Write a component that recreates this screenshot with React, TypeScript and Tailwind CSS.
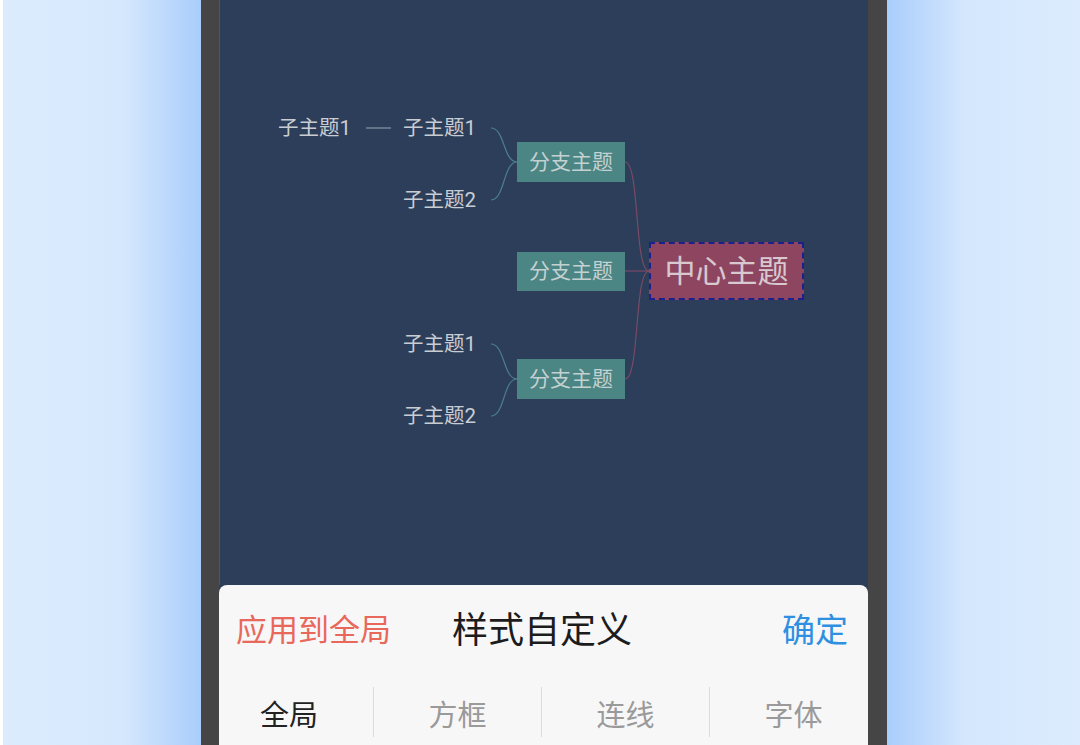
import React from 'react';

const font = { fontFamily: 'Roboto, "Noto Sans CJK SC", sans-serif' };

// Sub topic label, positioned by its vertical centre
function SubTopic({ label, left, cy }: { label: string; left: number; cy: number }) {
  return (
    <div
      className="absolute -translate-y-1/2 text-[20.5px] leading-none text-[#c9cdd3] whitespace-nowrap"
      style={{ left, top: cy }}
    >
      {label}
    </div>
  );
}

function Branch({ top, height = 40 }: { top: number; height?: number }) {
  return (
    <div
      className="absolute left-[297px] w-[108px] flex items-center justify-center bg-[#4b8584] text-[21px] text-[#c3d1d1] leading-none"
      style={{ top, height }}
    >
      分支主题
    </div>
  );
}

function MindMap() {
  return (
    <div className="relative flex-1 bg-[#2c3e5a] border-l border-[#45566f]">
      <svg className="absolute inset-0" width="649" height="585" fill="none">
        <g stroke="#4d7f8c" strokeWidth="1.2">
          <path d="M271 128 C 285 128, 283 162, 297 162" />
          <path d="M271 200 C 285 200, 283 162, 297 162" />
          <path d="M271 344 C 285 344, 283 379, 297 379" />
          <path d="M271 416 C 285 416, 283 379, 297 379" />
        </g>
        <g stroke="#7a4a66" strokeWidth="1.2">
          <path d="M405 162 C 420 162, 414 271, 429 271" />
          <path d="M405 271 L 429 271" />
          <path d="M405 379 C 420 379, 414 271, 429 271" />
        </g>
        <path d="M146 128 H 171" stroke="#8a96a6" strokeWidth="1.2" />
      </svg>

      <SubTopic label="子主题1" left={58} cy={128} />
      <SubTopic label="子主题1" left={183} cy={128} />
      <SubTopic label="子主题2" left={183} cy={200} />
      <SubTopic label="子主题1" left={183} cy={344} />
      <SubTopic label="子主题2" left={183} cy={416} />

      <Branch top={142} />
      <Branch top={252} height={39} />
      <Branch top={359} />

      {/* centre topic, selected */}
      <div className="absolute left-[429px] top-[242px] w-[155px] h-[58px] flex items-center justify-center bg-[#8e4660] border-2 border-dashed border-[#1c1f8c] text-[31px] text-[#d8c8cf] leading-none">
        中心主题
      </div>
    </div>
  );
}

function StylePanel() {
  const tabs = ['全局', '方框', '连线', '字体'];
  return (
    <div className="h-[160px] shrink-0 rounded-t-lg bg-[#f7f7f7] flex flex-col overflow-hidden">
      <div className="h-[91px] shrink-0 flex items-center">
        <div className="flex-1 pl-[17px] text-[31px] leading-none text-[#e8685b]">应用到全局</div>
        <div className="text-[36px] leading-none text-[#1c1c1c]">样式自定义</div>
        <div className="flex-1 pr-[20px] text-right text-[33px] leading-none text-[#2f8fe0]">确定</div>
      </div>
      <div className="h-[72px] shrink-0 flex items-center -ml-[14px]">
        {tabs.map((t, i) => (
          <div key={t} className="w-[168px] shrink-0 h-[50px] flex items-center">
            {i > 0 && <div className="w-px h-[50px] bg-[#dcdcdc]" />}
            <div
              className={`flex-1 text-center text-[29px] leading-none pt-[8px] ${i === 0 ? 'text-[#222222]' : 'text-[#9a9a9a]'}`}
            >
              {t}
            </div>
          </div>
        ))}
      </div>
    </div>
  );
}

export default function App() {
  return (
    <div className="w-[1080px] h-[745px] flex overflow-hidden" style={font}>
      <div className="w-[3px] bg-white" />
      <div className="w-[198px] bg-gradient-to-r from-[#dcecfe] via-[#d6e8fd] via-60% to-[#a9cdfb]" />
      <div className="w-[18px] bg-[#454545]" />
      <div className="w-[649px] shrink-0 flex flex-col bg-[#2c3e5a]">
        <MindMap />
        <StylePanel />
      </div>
      <div className="w-[19px] bg-[#454545]" />
      <div className="flex-1 bg-gradient-to-r from-[#a9cdfb] via-[#d4e7fd] via-40% to-[#dcecfe]" />
    </div>
  );
}
